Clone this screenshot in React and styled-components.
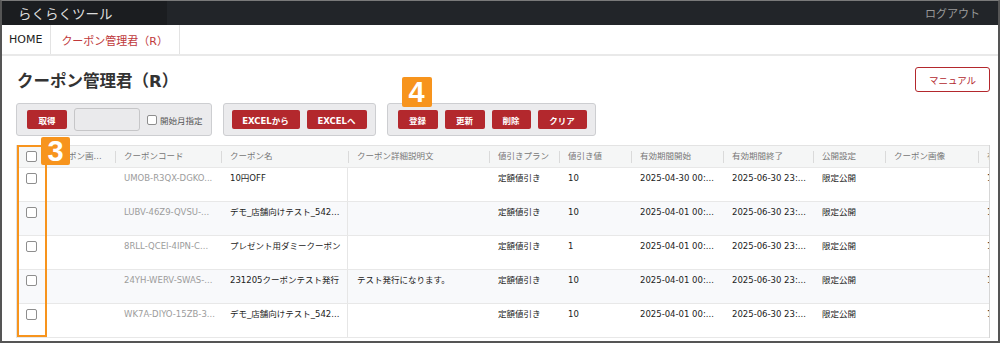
import React from "react";
import styled, { createGlobalStyle } from "styled-components";

const GlobalStyle = createGlobalStyle`
  body {
    margin: 0;
    background: #ffffff;
    font-family: "DejaVu Sans", "Noto Sans CJK JP", sans-serif;
  }
`;

const COLUMNS = "25px 73px 106px 127px 141px 70px 72px 92px 90px 72px 93px 60px";
const RED = "#b3282d";
const ORANGE = "#f7941d";

const Frame = styled.div`
  width: 1000px;
  height: 343px;
  box-sizing: border-box;
  border: 2px solid #555555;
  border-top: 1px solid #7a7a7a;
  overflow: hidden;
  display: flex;
  flex-direction: column;
  background: #ffffff;
`;

const TopBar = styled.div`
  height: 24px;
  display: flex;
  background: #222529;
  flex-shrink: 0;
`;

const Brand = styled.div`
  width: 165px;
  padding-left: 16px;
  box-sizing: border-box;
  display: flex;
  align-items: center;
  background: #1b1d20;
  color: #dcdcdc;
  font-size: 13.5px;
`;

const Logout = styled.div`
  margin-left: auto;
  padding-right: 18px;
  display: flex;
  align-items: center;
  color: #9a9a9a;
  font-size: 11px;
`;

const TabBar = styled.div`
  height: 29px;
  display: flex;
  border-bottom: 2px solid #e9e9e9;
  flex-shrink: 0;
`;

const Tab = styled.div`
  display: flex;
  align-items: center;
  padding: ${(p) => (p.$active ? "0 11px 0 10px" : "0 8px 0 7px")};
  border-right: 1px solid #e3e3e3;
  color: ${(p) => (p.$active ? "#c0393b" : "#222222")};
  font-size: 11px;
`;

const Main = styled.div`
  padding: 11px 8px 0 14px;
  display: flex;
  flex-direction: column;
`;

const HeaderRow = styled.div`
  height: 25px;
  display: flex;
  align-items: center;
  justify-content: space-between;
`;

const Title = styled.h1`
  margin: 0;
  padding-left: 1px;
  font-size: 16.5px;
  font-weight: bold;
  color: #333333;
`;

const ManualButton = styled.button`
  width: 75px;
  height: 25px;
  box-sizing: border-box;
  border: 1px solid ${RED};
  border-radius: 3px;
  background: #ffffff;
  color: ${RED};
  font-family: inherit;
  font-size: 9.5px;
  padding: 0;
`;

const Toolbar = styled.div`
  margin-top: 11px;
  display: flex;
  gap: 11px;
`;

const Group = styled.div`
  position: relative;
  height: 33px;
  box-sizing: border-box;
  display: flex;
  align-items: center;
  gap: 7px;
  padding: ${(p) => p.$pad || "0 8px 0 10px"};
  background: #ebebed;
  border: 1px solid #cdced1;
  border-radius: 3px;
`;

const RedButton = styled.button`
  width: ${(p) => p.$w}px;
  height: 19px;
  padding: 0;
  border: none;
  border-radius: 2px;
  background: ${RED};
  color: #ffffff;
  font-family: inherit;
  font-size: 8.5px;
  font-weight: bold;
`;

const DateInput = styled.div`
  width: 66px;
  height: 23px;
  box-sizing: border-box;
  background: #eaeaec;
  border: 1px solid #c6c6c8;
  border-radius: 3px;
`;

const CheckLabel = styled.label`
  display: flex;
  align-items: center;
  gap: 3px;
  font-size: 8.5px;
  color: #555555;
`;

const Box = styled.span`
  display: block;
  width: ${(p) => p.$size}px;
  height: ${(p) => p.$size}px;
  box-sizing: border-box;
  border: 1px solid #8e8e8e;
  border-radius: 2px;
  background: #ffffff;
`;

const Badge = styled.div`
  position: absolute;
  left: ${(p) => p.$left}px;
  top: ${(p) => p.$top}px;
  width: ${(p) => p.$w}px;
  height: ${(p) => p.$h}px;
  display: flex;
  align-items: center;
  justify-content: center;
  background: ${ORANGE};
  border-radius: 2px;
  color: #ffffff;
  font-family: "Liberation Sans", sans-serif;
  font-weight: bold;
  font-size: 29px;
  z-index: 2;
`;

const TableWrap = styled.div`
  position: relative;
  margin-top: 9px;
`;

const Scroller = styled.div`
  width: 974px;
  box-sizing: border-box;
  border-left: 1px solid #e2e2e2;
  border-right: 1px solid #d6d6d6;
  overflow: hidden;
`;

const Row = styled.div`
  display: grid;
  grid-template-columns: ${COLUMNS};
  height: ${(p) => (p.$head ? "23px" : "34px")};
  box-sizing: border-box;
  border-top: ${(p) => (p.$head ? "1px solid #e3e3e3" : "none")};
  border-bottom: 1px solid #e8e8e8;
  background: ${(p) => (p.$head ? "#f5f6f6" : p.$striped ? "#f8f9fb" : "#ffffff")};
`;

const HeadCell = styled.div`
  position: relative;
  padding: 0 4px 0 9px;
  line-height: 21px;
  font-size: 8.5px;
  color: #777777;
  white-space: nowrap;
  overflow: hidden;
  &::before {
    content: "";
    display: ${(p) => (p.$sep ? "block" : "none")};
    position: absolute;
    left: 0;
    top: 5px;
    width: 1px;
    height: 12px;
    background: #dadada;
  }
`;

const Cell = styled.div`
  padding: 4px 4px 0 9px;
  line-height: 12px;
  font-size: 8.5px;
  color: ${(p) => (p.$muted ? "#9c9c9c" : "#222222")};
  white-space: nowrap;
  overflow: hidden;
  box-sizing: border-box;
  border-right: ${(p) => (p.$divider ? "1px solid #e6e6e6" : "none")};
`;

const BoxCell = styled.div`
  padding: 5px 0 0 9px;
  box-sizing: border-box;
`;

const Highlight = styled.div`
  position: absolute;
  left: 1px;
  top: 0;
  width: 30px;
  height: 192px;
  box-sizing: border-box;
  border: 2px solid ${ORANGE};
  pointer-events: none;
  z-index: 1;
`;

const headers = [
  "クーポン画...",
  "クーポンコード",
  "クーポン名",
  "クーポン詳細説明文",
  "値引きプラン",
  "値引き値",
  "有効期間開始",
  "有効期間終了",
  "公開設定",
  "クーポン画像",
  "有",
];

const rows = [
  ["UMOB-R3QX-DGKO...", "10円OFF", "", "2025-04-30 00:...", "10"],
  ["LUBV-46Z9-QVSU-...", "デモ_店舗向けテスト_542...", "", "2025-04-01 00:...", "10"],
  ["8RLL-QCEI-4IPN-C...", "プレゼント用ダミークーポン", "", "2025-04-01 00:...", "1"],
  ["24YH-WERV-SWAS-...", "231205クーポンテスト発行", "テスト発行になります。", "2025-04-01 00:...", "10"],
  ["WK7A-DIYO-15ZB-3...", "デモ_店舗向けテスト_542...", "", "2025-04-01 00:...", "10"],
];

export default function App() {
  return (
    <>
      <GlobalStyle />
      <Frame>
        <TopBar>
          <Brand>らくらくツール</Brand>
          <Logout>ログアウト</Logout>
        </TopBar>
        <TabBar>
          <Tab>HOME</Tab>
          <Tab $active>クーポン管理君（R）</Tab>
        </TabBar>
        <Main>
          <HeaderRow>
            <Title>クーポン管理君（R）</Title>
            <ManualButton>マニュアル</ManualButton>
          </HeaderRow>
          <Toolbar>
            <Group>
              <RedButton $w={40}>取得</RedButton>
              <DateInput />
              <CheckLabel>
                <Box $size={10} />
                開始月指定
              </CheckLabel>
            </Group>
            <Group $pad="0 8px">
              <RedButton $w={68}>EXCELから</RedButton>
              <RedButton $w={60}>EXCELへ</RedButton>
            </Group>
            <Group>
              <Badge $left={14} $top={-27} $w={30} $h={30}>4</Badge>
              <RedButton $w={40}>登録</RedButton>
              <RedButton $w={40}>更新</RedButton>
              <RedButton $w={39}>削除</RedButton>
              <RedButton $w={49}>クリア</RedButton>
            </Group>
          </Toolbar>
          <TableWrap>
            <Highlight />
            <Badge $left={25} $top={-8} $w={29} $h={28}>3</Badge>
            <Scroller>
              <Row $head>
                <BoxCell>
                  <Box $size={11} />
                </BoxCell>
                {headers.map((h, i) => (
                  <HeadCell key={h} $sep={i > 0}>
                    {h}
                  </HeadCell>
                ))}
              </Row>
              {rows.map((r, i) => (
                <Row key={r[0]} $striped={i % 2 === 1}>
                  <BoxCell>
                    <Box $size={11} />
                  </BoxCell>
                  <Cell />
                  <Cell $muted>{r[0]}</Cell>
                  <Cell $divider>{r[1]}</Cell>
                  <Cell>{r[2]}</Cell>
                  <Cell>定額値引き</Cell>
                  <Cell>{r[4]}</Cell>
                  <Cell>{r[3]}</Cell>
                  <Cell>2025-06-30 23:...</Cell>
                  <Cell>限定公開</Cell>
                  <Cell />
                  <Cell>1</Cell>
                </Row>
              ))}
            </Scroller>
          </TableWrap>
        </Main>
      </Frame>
    </>
  );
}
